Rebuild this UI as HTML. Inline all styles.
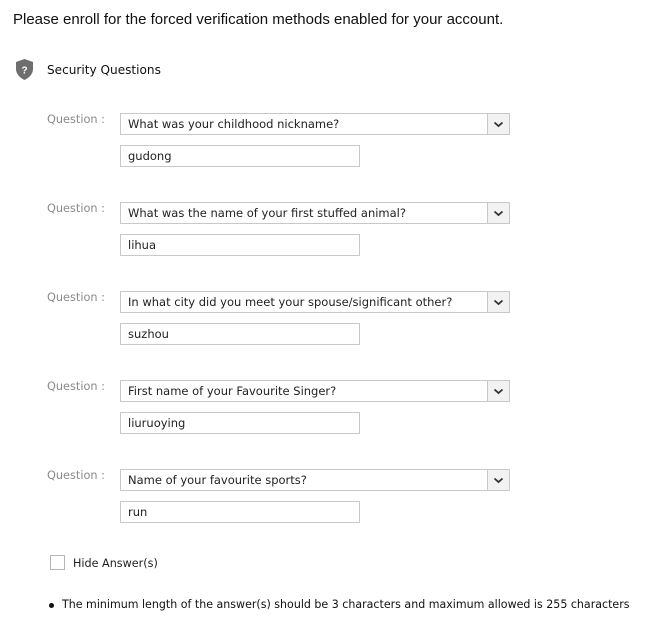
<!DOCTYPE html>
<html><head><meta charset="utf-8"><style>
body{margin:0;background:#fff;font-family:"DejaVu Sans","Liberation Sans",sans-serif;color:#222;}
.t{position:absolute;left:13px;top:11px;font-family:"Liberation Sans",sans-serif;font-size:15px;color:#111;}
.sq{position:absolute;left:47px;top:63px;font-size:12.1px;color:#111;}
.lbl{position:absolute;left:47px;font-size:11.3px;color:#8a8a8a;}
.sel{position:absolute;left:120px;width:388px;height:20px;border:1px solid #c8c8c8;font-size:11.5px;line-height:21px;box-sizing:content-box;}
.sel span{position:absolute;left:7px;top:0;}
.sel i{position:absolute;right:0;top:0;width:21px;height:20px;border-left:1px solid #c8c8c8;background:#f2f2f2;}
.inp{position:absolute;left:120px;width:238px;height:20px;border:1px solid #c8c8c8;font-size:11.5px;line-height:21px;}
.inp span{position:absolute;left:7px;}
.cb{position:absolute;left:50px;top:555px;width:13px;height:13px;border:1px solid #b5b5b5;}
.ha{position:absolute;left:73px;top:557px;font-size:11.2px;}
.note{position:absolute;left:62px;top:598px;font-size:11.05px;color:#111;}
.dot{position:absolute;left:49px;top:603px;width:5px;height:5px;border-radius:50%;background:#111;}
</style></head><body>
<div class="t">Please enroll for the forced verification methods enabled for your account.</div>
<svg style="position:absolute;left:16px;top:59px" width="17" height="22" viewBox="0 0 17 22"><path d="M8.5 0 L17 3 V10 C17 15 13 19 8.5 21 C4 19 0 15 0 10 V3 Z" fill="#6e6e6e"/><text x="8.5" y="14.5" font-size="10" font-weight="bold" fill="#fff" text-anchor="middle" font-family="Liberation Sans,sans-serif">?</text></svg>
<div class="sq">Security Questions</div>

<div class="lbl" style="top:113px">Question :</div>
<div class="sel" style="top:113px"><span>What was your childhood nickname?</span><i><svg width="21" height="20"><path d="M6.5 8.5 L10.5 12 L14.5 8.5" stroke="#333" stroke-width="1.8" fill="none"/></svg></i></div>
<div class="inp" style="top:145px"><span>gudong</span></div>

<div class="lbl" style="top:202px">Question :</div>
<div class="sel" style="top:202px"><span>What was the name of your first stuffed animal?</span><i><svg width="21" height="20"><path d="M6.5 8.5 L10.5 12 L14.5 8.5" stroke="#333" stroke-width="1.8" fill="none"/></svg></i></div>
<div class="inp" style="top:234px"><span>lihua</span></div>

<div class="lbl" style="top:291px">Question :</div>
<div class="sel" style="top:291px"><span>In what city did you meet your spouse/significant other?</span><i><svg width="21" height="20"><path d="M6.5 8.5 L10.5 12 L14.5 8.5" stroke="#333" stroke-width="1.8" fill="none"/></svg></i></div>
<div class="inp" style="top:323px"><span>suzhou</span></div>

<div class="lbl" style="top:380px">Question :</div>
<div class="sel" style="top:380px"><span>First name of your Favourite Singer?</span><i><svg width="21" height="20"><path d="M6.5 8.5 L10.5 12 L14.5 8.5" stroke="#333" stroke-width="1.8" fill="none"/></svg></i></div>
<div class="inp" style="top:412px"><span>liuruoying</span></div>

<div class="lbl" style="top:469px">Question :</div>
<div class="sel" style="top:469px"><span>Name of your favourite sports?</span><i><svg width="21" height="20"><path d="M6.5 8.5 L10.5 12 L14.5 8.5" stroke="#333" stroke-width="1.8" fill="none"/></svg></i></div>
<div class="inp" style="top:501px"><span>run</span></div>

<div class="cb"></div>
<div class="ha">Hide Answer(s)</div>
<div class="dot"></div>
<div class="note">The minimum length of the answer(s) should be 3 characters and maximum allowed is 255 characters</div>
</body></html>
